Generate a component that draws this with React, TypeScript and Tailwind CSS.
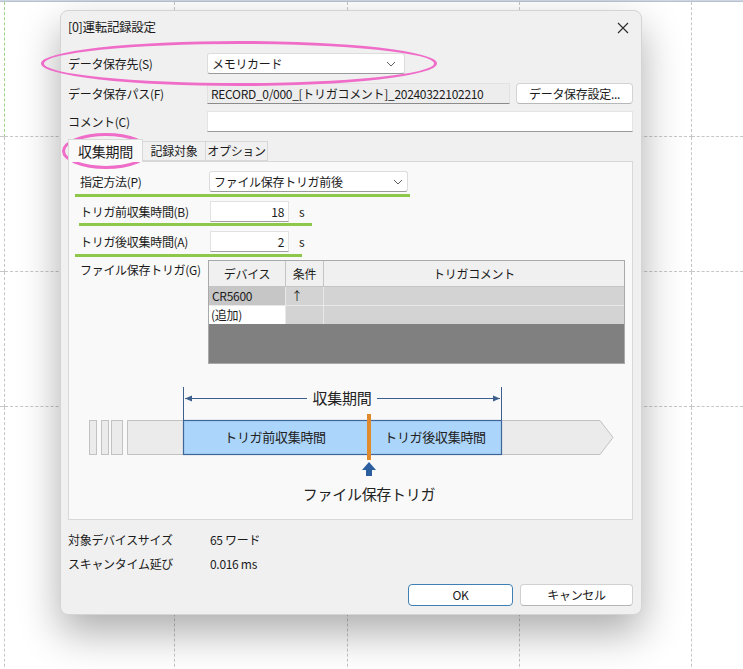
import React from 'react';

const FONT = '"Noto Sans CJK JP", "Noto Sans", sans-serif';

const cols = ['w-[5px]', 'w-[170px]', 'w-[173px]', 'w-[172px]', 'w-[172px]', 'flex-1'];
const rowHeights = ['h-[135px]', 'h-[135px]', 'h-[135px]', 'h-[300px]'];

function SheetBackground() {
    return (
        <div className="flex flex-col w-full h-full">
            <div className="h-[7px] bg-[#ececec] border-b border-[#cfd6df]" />
            <div className="flex h-[21px] bg-[#dce7f6] border-b border-[#b7c3d2]">
                {cols.map((c, i) => (
                    <div key={i} className={`${c} h-full ${i < cols.length - 1 ? 'border-r border-[#a8b6c8]' : ''}`} />
                ))}
            </div>
            {rowHeights.map((h, r) => (
                <div key={r} className={`flex ${h} shrink-0`}>
                    {cols.map((c, i) => (
                        <div
                            key={i}
                            className={`${c} h-full border-dashed border-b ${i < cols.length - 1 ? 'border-r' : ''} ${
                                r === 0 && i === 0 ? 'border-[#c6c6c6] border-r-[#9fd38a]' : 'border-[#c6c6c6]'
                            }`}
                        />
                    ))}
                </div>
            ))}
        </div>
    );
}

function Chevron() {
    return (
        <svg width="10" height="6" viewBox="0 0 10 6" className="shrink-0">
            <path d="M1 1 L5 5 L9 1" fill="none" stroke="#606060" strokeWidth="1" />
        </svg>
    );
}

function Diagram() {
    return (
        <svg width="563" height="132" viewBox="0 0 563 132" className="block">
            {/* dimension ticks */}
            <line x1="114.5" y1="8" x2="114.5" y2="48" stroke="#3d5f8c" strokeWidth="1" />
            <line x1="432.5" y1="8" x2="432.5" y2="48" stroke="#3d5f8c" strokeWidth="1" />
            <line x1="116" y1="19.5" x2="431" y2="19.5" stroke="#3d5f8c" strokeWidth="1" />
            <polygon points="116,19.5 123,16.5 123,22.5" fill="#3d5f8c" />
            <polygon points="431,19.5 424,16.5 424,22.5" fill="#3d5f8c" />
            <rect x="238" y="9" width="70" height="22" fill="#f9f9f9" />
            <text x="273" y="25" textAnchor="middle" fontSize="15" fill="#222" fontFamily={FONT}>収集期間</text>

            {/* gray timeline */}
            <rect x="20.5" y="41.5" width="7" height="34" fill="#ebebeb" stroke="#c2c2c2" />
            <rect x="32.5" y="41.5" width="7" height="34" fill="#ebebeb" stroke="#c2c2c2" />
            <rect x="42.5" y="41.5" width="11" height="34" fill="#ebebeb" stroke="#c2c2c2" />
            <polygon points="58.5,41.5 531,41.5 544,58.5 531,75.5 58.5,75.5" fill="#ebebeb" stroke="#c2c2c2" />

            {/* blue period */}
            <rect x="114.5" y="41.5" width="318" height="34" fill="#acd5fb" stroke="#3d6799" strokeWidth="1.2" />
            <text x="206" y="63" textAnchor="middle" fontSize="13" fill="#222" fontFamily={FONT} letterSpacing="-0.3">トリガ前収集時間</text>
            <text x="366" y="63" textAnchor="middle" fontSize="13" fill="#222" fontFamily={FONT} letterSpacing="-0.3">トリガ後収集時間</text>
            <rect x="298" y="35" width="4" height="46" fill="#e08a2e" />

            {/* trigger arrow */}
            <polygon points="300,83 293,91 307,91" fill="#2b5f9f" />
            <rect x="297" y="91" width="6" height="6" fill="#2b5f9f" />
            <text x="300" y="121" textAnchor="middle" fontSize="15" fill="#222" fontFamily={FONT}>ファイル保存トリガ</text>
        </svg>
    );
}

function Dialog() {
    return (
        <div className="absolute left-[60px] top-[10px] w-[582px] h-[605px] rounded-[8px] bg-[#f0f0f0] border border-[#d4d4d4] shadow-[0_18px_40px_rgba(0,0,0,0.32)] flex flex-col text-[12px] tracking-[-0.3px] text-[#1b1b1b]">
            {/* title bar */}
            <div className="h-[33px] flex items-center justify-between pl-[7px] pr-[12px]">
                <span className="text-[12.5px]">[0]運転記録設定</span>
                <svg width="12" height="12" viewBox="0 0 12 12">
                    <path d="M1 1 L11 11 M11 1 L1 11" stroke="#2a2a2a" strokeWidth="1.1" />
                </svg>
            </div>

            <div className="flex flex-col pl-[7px] pr-[8px]">
                {/* data destination */}
                <div className="mt-[9px] h-[21px] flex items-center">
                    <div className="w-[139px]">データ保存先(S)</div>
                    <div className="w-[198px] h-full bg-white border border-[#dcdcdc] border-b-[#9a9a9a] rounded-[3px] flex items-center justify-between pl-[4px] pr-[8px]">
                        <span>メモリカード</span>
                        <Chevron />
                    </div>
                </div>

                {/* data path */}
                <div className="mt-[9px] h-[21px] flex items-center">
                    <div className="w-[139px]">データ保存パス(F)</div>
                    <div className="w-[303px] h-full bg-[#ededed] border border-[#e2e2e2] border-b-[#8c8c8c] flex items-center pl-[3px]">
                        RECORD_0/000_[トリガコメント]_20240322102210
                    </div>
                    <div className="ml-[6px] flex-1 h-full bg-white border border-[#d3d3d3] border-b-[#b8b8b8] rounded-[4px] flex items-center justify-center">
                        データ保存設定...
                    </div>
                </div>

                {/* comment */}
                <div className="mt-[7px] h-[21px] flex items-center">
                    <div className="w-[139px]">コメント(C)</div>
                    <div className="flex-1 h-full bg-white border border-[#e4e4e4] border-b-[#9a9a9a]" />
                </div>

                {/* tabs */}
                <div className="mt-[7px] h-[22px] flex items-end relative z-10">
                    <div className="w-[75px] h-[23px] -mb-px bg-[#f9f9f9] border border-[#d8d8d8] border-b-0 flex items-center justify-center text-[14px]">
                        収集期間
                    </div>
                    <div className="w-[63px] h-[20px] bg-[#f0f0f0] border border-[#d8d8d8] border-l-0 flex items-center justify-center">
                        記録対象
                    </div>
                    <div className="w-[62px] h-[20px] bg-[#f0f0f0] border border-[#d8d8d8] border-l-0 flex items-center justify-center">
                        オプション
                    </div>
                </div>

                {/* tab panel */}
                <div className="h-[359px] bg-[#f9f9f9] border border-[#d8d8d8] flex flex-col pt-[9px]">
                    <div className="relative h-[21px] flex items-center pl-[11px]">
                        <div className="w-[129px]">指定方法(P)</div>
                        <div className="w-[199px] h-full bg-white border border-[#dcdcdc] border-b-[#9a9a9a] rounded-[3px] flex items-center justify-between pl-[4px] pr-[4px]">
                            <span>ファイル保存トリガ前後</span>
                            <Chevron />
                        </div>
                        <div className="absolute left-[6px] top-[23px] w-[335px] h-[3px] bg-[#8dc84a]" />
                    </div>

                    <div className="relative mt-[9px] h-[21px] flex items-center pl-[11px]">
                        <div className="w-[130px]">トリガ前収集時間(B)</div>
                        <div className="w-[79px] h-full bg-white border border-[#e2e2e2] border-b-[#a0a0a0] flex items-center justify-end pr-[4px]">
                            18
                        </div>
                        <span className="ml-[10px]">s</span>
                        <div className="absolute left-[10px] top-[22px] w-[233px] h-[3px] bg-[#8dc84a]" />
                    </div>

                    <div className="relative mt-[9px] h-[21px] flex items-center pl-[11px]">
                        <div className="w-[130px]">トリガ後収集時間(A)</div>
                        <div className="w-[79px] h-full bg-white border border-[#e2e2e2] border-b-[#a0a0a0] flex items-center justify-end pr-[4px]">
                            2
                        </div>
                        <span className="ml-[10px]">s</span>
                        <div className="absolute left-[6px] top-[23px] w-[227px] h-[3px] bg-[#8dc84a]" />
                    </div>

                    {/* trigger table */}
                    <div className="mt-[8px] flex pl-[11px]">
                        <div className="w-[128px] h-[20px] flex items-center">ファイル保存トリガ(G)</div>
                        <div className="w-[417px] h-[104px] border border-[#a9a9a9] bg-[#808080] flex flex-col">
                            <div className="h-[26px] flex bg-[#f0f0f0] border-b border-[#c4c4c4]">
                                <div className="w-[77px] border-r border-[#c4c4c4] flex items-center justify-center">デバイス</div>
                                <div className="w-[38px] border-r border-[#c4c4c4] flex items-center justify-center">条件</div>
                                <div className="flex-1 flex items-center justify-center">トリガコメント</div>
                            </div>
                            <div className="h-[19px] flex bg-[#d3d3d3] border-b border-[#e8e8e8]">
                                <div className="w-[77px] bg-[#c6c6c6] border-r border-[#e8e8e8] flex items-center pl-[3px]">CR5600</div>
                                <div className="w-[38px] border-r border-[#e8e8e8] flex items-center pl-[5px]">↑</div>
                                <div className="flex-1" />
                            </div>
                            <div className="h-[18px] flex bg-[#d3d3d3]">
                                <div className="w-[77px] bg-white border-r border-[#e8e8e8] flex items-center pl-[2px]">(追加)</div>
                                <div className="w-[38px] border-r border-[#e8e8e8]" />
                                <div className="flex-1" />
                            </div>
                        </div>
                    </div>

                    <div className="mt-[15px]">
                        <Diagram />
                    </div>
                </div>

                {/* footer info */}
                <div className="mt-[11px] h-[18px] flex items-center">
                    <div className="w-[142px]">対象デバイスサイズ</div>
                    <div>65 ワード</div>
                </div>
                <div className="mt-[6px] h-[18px] flex items-center">
                    <div className="w-[142px]">スキャンタイム延び</div>
                    <div>0.016 ms</div>
                </div>

                <div className="mt-[11px] h-[22px] flex justify-end gap-[7px]">
                    <button className="w-[105px] h-full bg-white border border-[#3f7fb3] rounded-[4px] flex items-center justify-center">
                        OK
                    </button>
                    <button className="w-[113px] h-full bg-white border border-[#d0d0d0] border-b-[#b5b5b5] rounded-[4px] flex items-center justify-center">
                        キャンセル
                    </button>
                </div>
            </div>
        </div>
    );
}

export default function App() {
    return (
        <div className="relative w-[743px] h-[669px] overflow-hidden bg-white" style={{ fontFamily: FONT }}>
            <SheetBackground />
            <Dialog />
            {/* highlight annotations */}
            <div className="absolute left-[41px] top-[41px] w-[396px] h-[45px] rounded-[50%] border-[3.5px] border-[#ef6cc8]" />
            <div className="absolute left-[62px] top-[133px] w-[88px] h-[36px] rounded-[50%] border-[3.5px] border-[#ef6cc8]" />
        </div>
    );
}
